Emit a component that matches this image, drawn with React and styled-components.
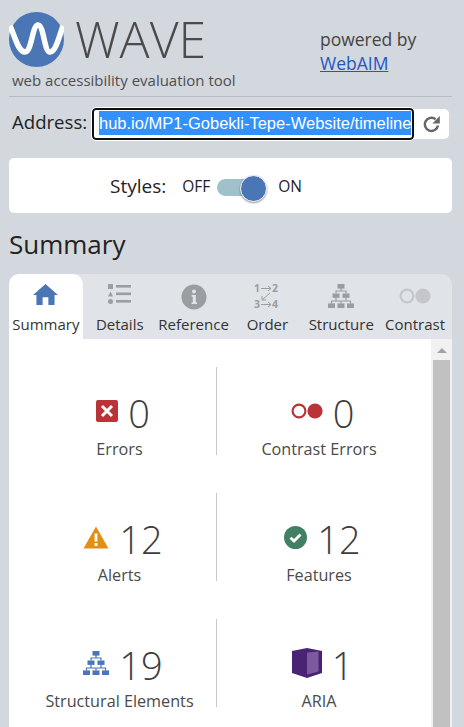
import * as React from 'react';
import styled, { createGlobalStyle } from 'styled-components';

const GlobalStyle = createGlobalStyle`
  html, body {
    margin: 0;
    height: 100%;
    overflow: hidden;
    background: #d3d7de;
  }
  body {
    font-family: 'Open Sans', sans-serif;
    color: #333;
  }
`;

const BLUE = '#4a76b5';
const TAB_GREY = '#9b9ea1';

const HomeIcon = () => (
  <svg width="25" height="21" viewBox="0 0 26 22">
    <path fill={BLUE} d="M13 0 L26 11.5 L22.5 11.5 L22.5 22 L16 22 L16 14 L10 14 L10 22 L3.5 22 L3.5 11.5 L0 11.5 Z" />
  </svg>
);

const ListIcon = () => (
  <svg width="24" height="20" viewBox="0 0 24 20" fill={TAB_GREY}>
    <rect x="0" y="0" width="5" height="5" />
    <path d="M2.5 7.5 L5 12.5 L0 12.5 Z" />
    <circle cx="2.5" cy="17.5" r="2.5" />
    <rect x="8" y="1" width="15" height="2.6" />
    <rect x="8" y="8.5" width="15" height="2.6" />
    <rect x="8" y="16" width="15" height="2.6" />
  </svg>
);

const InfoIcon = () => (
  <svg width="26" height="26" viewBox="0 0 26 26">
    <circle cx="13" cy="13" r="12.5" fill={TAB_GREY} />
    <circle cx="13" cy="7.6" r="2" fill="#e0e3e8" />
    <path fill="#e0e3e8" d="M10.6 11 H14.8 V18.2 H16 V20 H10.6 V18.2 H11.8 V12.8 H10.6 Z" />
  </svg>
);

const OrderDigit = styled.text`
  font-family: 'Open Sans', sans-serif;
  font-size: 10.5px;
  font-weight: 700;
  fill: ${TAB_GREY};
  stroke: none;
`;

const OrderIcon = () => (
  <svg width="26" height="25" viewBox="0 0 26 25" fill="none" stroke={TAB_GREY} strokeWidth="1" overflow="visible">
    <OrderDigit x="0" y="8">1</OrderDigit>
    <OrderDigit x="18" y="8">2</OrderDigit>
    <OrderDigit x="0" y="24">3</OrderDigit>
    <OrderDigit x="18" y="24">4</OrderDigit>
    <path d="M7 4.5 H17 M14 2 L17 4.5 L14 7" />
    <path d="M7 20.5 H17 M14 18 L17 20.5 L14 23" />
    <path d="M16 9 L8 16 M8 12 V16 H12" />
  </svg>
);

const TreeIcon = ({ color, width, height }) => (
  <svg width={width} height={height} viewBox="0 0 26 24" fill={color}>
    <rect x="9.5" y="0" width="7" height="4.6" />
    <rect x="4.5" y="9.5" width="7" height="4.4" />
    <rect x="14.5" y="9.5" width="7" height="4.4" />
    <rect x="0" y="19.4" width="7" height="4.6" />
    <rect x="9.5" y="19.4" width="7" height="4.6" />
    <rect x="19" y="19.4" width="7" height="4.6" />
    <path fill="none" stroke={color} strokeWidth="1.2" d="M13 4 V7 M8 9.5 V7 H18 V9.5 M8 14 V17 M3.5 19.5 V17 H13 V19.5 M18 14 V17 M13 17 H22.5 V19.5" />
  </svg>
);

const CirclesIcon = ({ color, fillColor, width }) => (
  <svg width={width} height={width * 0.5} viewBox="0 0 32 16">
    <circle cx="8" cy="8" r="6.4" fill="none" stroke={color} strokeWidth="2.2" />
    <circle cx="24" cy="8" r="7.6" fill={fillColor} />
  </svg>
);

const ErrorIcon = () => (
  <svg width="22" height="22" viewBox="0 0 22 22">
    <rect width="22" height="22" rx="2" fill="#b93339" />
    <path d="M6 6 L16 16 M16 6 L6 16" stroke="#fff" strokeWidth="3" />
  </svg>
);

const AlertIcon = () => (
  <svg width="26" height="23" viewBox="0 0 26 23">
    <path fill="#e38f16" d="M13 0.5 L25.5 22.5 H0.5 Z" />
    <rect x="11.6" y="7.5" width="2.8" height="8" fill="#fff" />
    <rect x="11.6" y="17" width="2.8" height="3" fill="#fff" />
  </svg>
);

const CheckIcon = () => (
  <svg width="23" height="23" viewBox="0 0 23 23">
    <circle cx="11.5" cy="11.5" r="11.5" fill="#428063" />
    <path d="M6.5 11.8 L10 15 L16.5 8.5" fill="none" stroke="#fff" strokeWidth="2.8" />
  </svg>
);

const AriaIcon = () => (
  <svg width="30" height="30" viewBox="0 0 30 30">
    <path fill="#4a2375" d="M0 3 L15 0 L30 3 V25 L15 30 L0 25 Z" />
    <path fill="#7d5a9e" d="M15 4.5 L26.5 3.5 V23.5 L15 26.5 Z" />
  </svg>
);

const tabs = [
  { label: 'Summary', icon: <HomeIcon />, active: true },
  { label: 'Details', icon: <ListIcon /> },
  { label: 'Reference', icon: <InfoIcon /> },
  { label: 'Order', icon: <OrderIcon /> },
  { label: 'Structure', icon: <TreeIcon color={TAB_GREY} width={26} height={24} /> },
  { label: 'Contrast', icon: <CirclesIcon color="#c4c6c9" fillColor="#c4c6c9" width={32} />, inset: 4 },
];

const stats = [
  { label: 'Errors', value: 0, icon: <ErrorIcon /> },
  { label: 'Contrast Errors', value: 0, icon: <CirclesIcon color="#b93339" fillColor="#b93339" width={32} /> },
  { label: 'Alerts', value: 12, icon: <AlertIcon /> },
  { label: 'Features', value: 12, icon: <CheckIcon /> },
  { label: 'Structural Elements', value: 19, icon: <TreeIcon color={BLUE} width={26} height={24} /> },
  { label: 'ARIA', value: 1, icon: <AriaIcon /> },
];

const App = () => (
  <Page>
    <GlobalStyle />
    <Header>
      <Brand>
        <LogoRow>
          <svg width="55" height="55" viewBox="0 0 55 55">
            <circle cx="27.5" cy="27.5" r="27.5" fill={BLUE} />
            <path
              d="M1 14 C6 24 9 40 16 40 C23 40 23 13 29 13 C35 13 35 40 41 40 C47 40 50 24 54 14"
              fill="none"
              stroke="#fff"
              strokeWidth="5.5"
            />
          </svg>
          <WaveTitle>WAVE</WaveTitle>
        </LogoRow>
        <Tagline>web accessibility evaluation tool</Tagline>
      </Brand>
      <Powered>
        powered by
        <br />
        <PoweredLink href="#">WebAIM</PoweredLink>
      </Powered>
    </Header>
    <AddressRow>
      <AddressLabel>Address:</AddressLabel>
      <AddressInput>
        <Selected>hub.io/MP1-Gobekli-Tepe-Website/timeline</Selected>
      </AddressInput>
      <RefreshButton>
        <svg width="18" height="18" viewBox="0 0 18 18" fill="none">
          <path d="M15 10.5 A6.6 6.6 0 1 1 12.6 4.2" stroke="#666" strokeWidth="2.4" />
          <path d="M16.8 1 V8.6 H9.4 Z" fill="#666" />
        </svg>
      </RefreshButton>
    </AddressRow>
    <StylesCard>
      <StylesLabel>Styles:</StylesLabel>
      <ToggleText>OFF</ToggleText>
      <Toggle>
        <ToggleKnob />
      </Toggle>
      <ToggleText>ON</ToggleText>
    </StylesCard>
    <Heading>Summary</Heading>
    <TabBar>
      {tabs.map((tab) => (
        <Tab key={tab.label} $active={tab.active}>
          <TabIcon $inset={tab.inset || 0}>{tab.icon}</TabIcon>
          <TabLabel>{tab.label}</TabLabel>
        </Tab>
      ))}
    </TabBar>
    <Panel>
      <StatGrid>
        {stats.map((stat, i) => (
          <Stat key={stat.label} $left={i % 2 === 0}>
            <StatTop>
              <StatIcon>{stat.icon}</StatIcon>
              <StatValue>{stat.value}</StatValue>
            </StatTop>
            <StatLabel>{stat.label}</StatLabel>
          </Stat>
        ))}
      </StatGrid>
      <Scrollbar>
        <ScrollArrow />
        <ScrollThumb />
      </Scrollbar>
    </Panel>
  </Page>
);

const Page = styled.div`
  width: 464px;
  height: 727px;
  box-sizing: border-box;
  padding: 12px 12px 0 9px;
  display: flex;
  flex-direction: column;
  overflow: hidden;
`;
const Header = styled.header`
  display: flex;
  justify-content: space-between;
  height: 84px;
  border-bottom: 1px solid #b9bcc2;
  flex-shrink: 0;
`;
const Brand = styled.div`
  display: flex;
  flex-direction: column;
`;
const LogoRow = styled.div`
  display: flex;
  align-items: center;
  gap: 11px;
  height: 55px;
`;
const WaveTitle = styled.div`
  font-size: 50px;
  font-weight: 300;
  line-height: 55px;
  color: #4b4b4b;
`;
const Tagline = styled.div`
  font-size: 15px;
  line-height: 20px;
  margin: 3px 0 0 3px;
  color: #4f4f4f;
`;
const Powered = styled.div`
  width: 132px;
  margin-top: 15px;
  font-size: 17.5px;
  line-height: 24px;
  color: #444;
`;
const PoweredLink = styled.a`
  color: #1f57c3;
`;
const AddressRow = styled.div`
  display: flex;
  align-items: center;
  height: 32px;
  margin-top: 11px;
  flex-shrink: 0;
`;
const AddressLabel = styled.label`
  width: 83px;
  padding: 0 0 6px 3px;
  box-sizing: border-box;
  font-size: 18.6px;
  color: #222;
`;
const AddressInput = styled.div`
  width: 322px;
  height: 32px;
  box-sizing: border-box;
  border: 2px solid #101010;
  border-radius: 4px;
  outline: 1px solid #fff;
  background: #fff;
  overflow: hidden;
  white-space: nowrap;
  padding-left: 5px;
  font-family: 'Liberation Sans', sans-serif;
  font-size: 16.5px;
  line-height: 28px;
`;
const Selected = styled.span`
  background: #3390ff;
  color: #fff;
  display: inline-block;
  height: 24px;
  line-height: 24px;
  vertical-align: 1px;
`;
const RefreshButton = styled.div`
  width: 35px;
  height: 30px;
  background: #fff;
  border-radius: 0 5px 5px 0;
  display: flex;
  align-items: center;
  justify-content: center;
`;
const StylesCard = styled.div`
  display: flex;
  align-items: center;
  height: 55px;
  box-sizing: border-box;
  margin-top: 18px;
  padding: 3px 0 0 101px;
  background: #fff;
  border-radius: 5px;
  flex-shrink: 0;
`;
const StylesLabel = styled.span`
  font-size: 19px;
  margin-top: -3px;
  color: #222;
  margin-right: 16px;
`;
const ToggleText = styled.span`
  font-size: 15.5px;
  margin-top: -2px;
  color: #222;
`;
const Toggle = styled.div`
  width: 45px;
  height: 17px;
  margin: 0 16px 0 7px;
  border-radius: 9px;
  background: #a0c1cb;
  position: relative;
`;
const ToggleKnob = styled.div`
  position: absolute;
  right: -5px;
  top: -4px;
  width: 25px;
  height: 25px;
  border-radius: 50%;
  background: ${BLUE};
  box-shadow: 0 1px 2px rgba(0, 0, 0, 0.4);
  border: 0.5px solid #fff;
`;
const Heading = styled.h2`
  margin: 14px 0 12px;
  font-size: 26px;
  font-weight: 400;
  line-height: 35px;
  color: #222;
  flex-shrink: 0;
`;
const TabBar = styled.div`
  display: flex;
  height: 65px;
  background: #e0e3e8;
  border-radius: 10px 10px 0 0;
  flex-shrink: 0;
`;
const Tab = styled.div`
  width: 74px;
  display: flex;
  flex-direction: column;
  align-items: center;
  background: ${(p) => (p.$active ? '#fff' : 'transparent')};
  border-radius: ${(p) => (p.$active ? '10px 10px 0 0' : '0')};
`;
const TabIcon = styled.div`
  height: 27px;
  box-sizing: content-box;
  padding-top: ${(p) => 10 + p.$inset}px;
  margin-bottom: ${(p) => -p.$inset}px;
  display: flex;
  align-items: flex-start;
  justify-content: center;
`;
const TabLabel = styled.div`
  font-size: 15px;
  line-height: 20px;
  margin-top: 3px;
  white-space: nowrap;
  color: #333;
`;
const Panel = styled.div`
  flex: 1;
  display: flex;
  background: #fff;
  min-height: 0;
  margin-bottom: -10px;
`;
const StatGrid = styled.div`
  flex: 1;
  display: grid;
  grid-template-columns: 208px 1fr;
  grid-auto-rows: 88px;
  row-gap: 38px;
  padding-top: 28px;
`;
const Stat = styled.div`
  display: flex;
  flex-direction: column;
  align-items: center;
  border-right: ${(p) => (p.$left ? '1px solid #c9c9c9' : '0')};
  padding: ${(p) => (p.$left ? '0 0 0 14px' : '0 10px 0 0')};
`;
const StatTop = styled.div`
  display: flex;
  align-items: center;
  justify-content: center;
  gap: 10px;
  height: 50px;
  margin-top: 21px;
  padding-left: 7px;
`;
const StatIcon = styled.div`
  display: flex;
  margin-bottom: 4px;
`;
const StatValue = styled.span`
  font-size: 38px;
  line-height: 50px;
  font-weight: 300;
  color: #3d3d3d;
`;
const StatLabel = styled.div`
  font-size: 16.2px;
  line-height: 22px;
  color: #4a4a4a;
  white-space: nowrap;
`;
const Scrollbar = styled.div`
  width: 21px;
  background: #f1f1f1;
  display: flex;
  flex-direction: column;
  align-items: center;
`;
const ScrollArrow = styled.div`
  margin: 9px 0 7px;
  width: 0;
  height: 0;
  border-left: 5px solid transparent;
  border-right: 5px solid transparent;
  border-bottom: 5px solid #a3a3a3;
`;
const ScrollThumb = styled.div`
  flex: 1;
  width: 17px;
  background: #c1c1c1;
`;

export default App;
